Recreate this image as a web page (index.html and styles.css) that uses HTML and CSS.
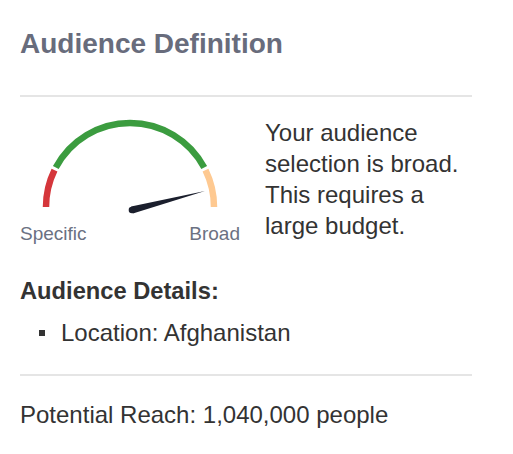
FILE: index.html
```html
<!DOCTYPE html>
<html>
<head>
<meta charset="utf-8">
<link rel="stylesheet" href="styles.css">
</head>
<body>
<div class="panel">
  <h2 class="title">Audience Definition</h2>
  <hr class="rule rule-top">
  <div class="summary">
    <div class="gauge">
      <svg class="gauge-svg" width="220" height="106" viewBox="0 0 220 106">
        <path d="M26 90 A84 84 0 0 1 34.5 53.2" fill="none" stroke="#d5363b" stroke-width="6.5"/>
        <path d="M35.8 50.6 A84 84 0 0 1 184.2 50.6" fill="none" stroke="#3b9c3f" stroke-width="6.5"/>
        <path d="M185.5 53.2 A84 84 0 0 1 194 90" fill="none" stroke="#fec991" stroke-width="6.5"/>
        <polygon points="112.9,96.4 111.1,89.6 185,74" fill="#1b1f2d"/>
        <circle cx="112" cy="93" r="3.3" fill="#1b1f2d"/>
      </svg>
      <div class="gauge-labels"><span>Specific</span><span>Broad</span></div>
    </div>
    <p class="message">Your audience selection is broad. This requires a large budget.</p>
  </div>
  <h3 class="details-title">Audience Details:</h3>
  <ul class="details">
    <li>Location: Afghanistan</li>
  </ul>
  <hr class="rule rule-bottom">
  <p class="reach">Potential Reach: 1,040,000 people</p>
</div>
</body>
</html>
```
FILE: styles.css
```css
html, body {
  margin: 0;
  padding: 0;
  background: #fff;
}
.panel {
  width: 452px;
  margin-left: 20px;
  font-family: "Liberation Sans", Arial, sans-serif;
  color: #333;
}
.title {
  margin: 28px 0 0;
  font-size: 28px;
  line-height: 32px;
  font-weight: bold;
  color: #686c7c;
}
.rule {
  border: 0;
  height: 2px;
  background: #e5e5e5;
  margin: 0;
}
.rule-top {
  margin-top: 35px;
}
.summary {
  display: flex;
  margin-top: 20px;
}
.gauge {
  width: 220px;
  flex: none;
  margin-right: 25px;
}
.gauge-svg {
  display: block;
}
.gauge-labels {
  display: flex;
  justify-content: space-between;
  font-size: 19px;
  line-height: 22px;
  color: #6b7182;
}
.message {
  margin: 0;
  width: 200px;
  font-size: 24px;
  line-height: 31px;
}
.details-title {
  margin: 33px 0 0;
  font-size: 23.7px;
  line-height: 27px;
  font-weight: bold;
}
.details {
  list-style: none;
  margin: 14px 0 0;
  padding: 0 0 0 19px;
  font-size: 24px;
  line-height: 28px;
}
.details li::before {
  content: "";
  display: inline-block;
  width: 6px;
  height: 6px;
  background: #333;
  margin-right: 16px;
  vertical-align: 5px;
}
.rule-bottom {
  margin-top: 27px;
}
.reach {
  margin: 25px 0 0;
  font-size: 24px;
  line-height: 28px;
}
```
